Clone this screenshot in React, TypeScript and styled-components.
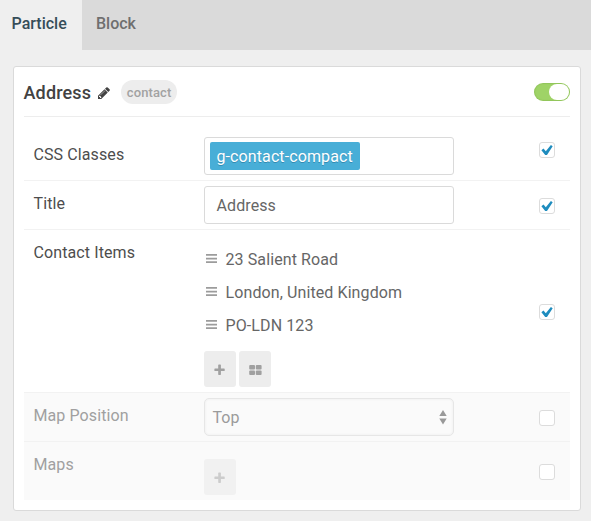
import React from 'react';
import styled, { createGlobalStyle } from 'styled-components';

const GlobalStyle = createGlobalStyle`
  *, *::before, *::after { box-sizing: border-box; }
  body {
    margin: 0;
    background: #efefef;
    color: #666;
    font-family: Roboto, "Liberation Sans", sans-serif;
    font-size: 16px;
    line-height: 24px;
    letter-spacing: 0.1px;
    -webkit-font-smoothing: antialiased;
  }
`;

const Page = styled.main`
  width: 591px;
  height: 521px;
  overflow: hidden;
  background: #efefef;
`;

const Tabs = styled.nav`
  display: flex;
  height: 50px;
  background: #dadada;
`;

const Tab = styled.a<{ $active?: boolean }>`
  width: ${p => (p.$active ? '82px' : 'auto')};
  height: 50px;
  padding-left: ${p => (p.$active ? '11.5px' : '14px')};
  line-height: 47px;
  font-weight: 500;
  letter-spacing: 0;
  color: ${p => (p.$active ? '#354d59' : '#6f6f6f')};
  background: ${p => (p.$active ? '#efefef' : 'transparent')};
`;

const Card = styled.section`
  margin: 16px 10px 0 13px;
  height: 445px;
  padding: 0 10px;
  background: #fff;
  border: 1px solid #dadada;
  border-radius: 3px;
`;

const CardHeader = styled.header`
  display: flex;
  align-items: center;
  height: 50px;
  border-bottom: 1px solid #ededed;
`;

const Heading = styled.h4`
  margin: 3px 0 0 -0.5px;
  font-size: 18px;
  font-weight: 500;
  letter-spacing: 0.15px;
  color: #424242;
`;

const PencilIcon = styled.svg`
  width: 12px;
  height: 12px;
  margin: 2px 0 0 7px;
  fill: #424242;
`;

const Badge = styled.span`
  width: 56px;
  height: 24px;
  margin: 1px 0 0 11px;
  border-radius: 12px;
  background: #ededed;
  color: #a2a2a2;
  font-size: 13px;
  font-weight: 500;
  line-height: 25px;
  text-align: center;
`;

const Toggle = styled.span`
  display: flex;
  justify-content: flex-end;
  width: 36px;
  height: 18px;
  margin-left: auto;
  padding: 1px;
  border-radius: 9px;
  background: #9fd367;
  box-shadow: inset 0 0 1px 1px rgba(70, 120, 20, 0.15);
`;

const Knob = styled.span`
  width: 20px;
  height: 16px;
  border-radius: 8px;
  background: #fff;
`;

const Row = styled.div<{ $height: number; $first?: boolean; $disabled?: boolean; $last?: boolean }>`
  display: grid;
  grid-template-columns: 180px 250px 1fr;
  height: ${p => p.$height}px;
  padding-top: ${p => (p.$first ? 15 : 0)}px;
  border-bottom: ${p => (p.$last ? 'none' : '1px solid #f2f2f2')};
  background: ${p => (p.$disabled ? '#fafafa' : '#fff')};
`;

const Label = styled.span<{ $disabled?: boolean }>`
  padding: 11px 0 0 9.5px;
  color: ${p => (p.$disabled ? '#a0a0a0' : '#4d4d4d')};
`;

const Field = styled.div`
  padding-top: 5px;
`;

const CheckCell = styled.div<{ $first?: boolean }>`
  display: flex;
  align-items: center;
  justify-content: flex-end;
  margin-top: ${p => (p.$first ? -15 : 0)}px;
  padding: 2px 15px 0 0;
`;

const Box = styled.span`
  display: flex;
  align-items: center;
  justify-content: center;
  width: 16px;
  height: 16px;
  background: #fff;
  border: 1px solid #dcdcdc;
  border-radius: 3px;
`;

const InputBox = styled.div<{ $tags?: boolean }>`
  display: flex;
  align-items: center;
  height: 38px;
  padding: ${p => (p.$tags ? '0 5px' : '2px 11.5px 0')};
  background: #fff;
  border: 1px solid #dadada;
  border-radius: 3px;
`;

const Tag = styled.span`
  width: 150px;
  height: 28px;
  padding-left: 6.5px;
  border-radius: 2px;
  background: #48aed7;
  color: #fff;
  line-height: 29px;
  text-shadow: 0 1px 0 rgba(0, 51, 83, 0.3);
`;

const Select = styled.div`
  display: flex;
  align-items: center;
  justify-content: space-between;
  height: 38px;
  padding: 1px 6px 0 7.5px;
  border: 1px solid #e6e6e6;
  border-radius: 5px;
  box-shadow: inset 0 0 3px rgba(0, 0, 0, 0.06);
  color: #9b9b9b;
`;

const List = styled.ul`
  list-style: none;
  margin: 8px 0 0;
  padding: 0;
`;

const ListItem = styled.li`
  display: flex;
  align-items: center;
  height: 33px;
  white-space: nowrap;
`;

const Handle = styled.svg`
  width: 11px;
  height: 9px;
  margin: -2px 8.5px 0 2px;
  fill: #9c9c9c;
`;

const Buttons = styled.div<{ $top: number }>`
  display: flex;
  gap: 3px;
  margin-top: ${p => p.$top}px;
`;

const IconButton = styled.button<{ $disabled?: boolean }>`
  display: flex;
  align-items: center;
  justify-content: center;
  width: 32px;
  height: 36px;
  padding: 1px 0 0;
  border: 0;
  border-radius: 3px;
  background: ${p => (p.$disabled ? '#f1f1f1' : '#ededed')};
  color: ${p => (p.$disabled ? '#cccccc' : '#a0a0a0')};
`;

const Plus = () => (
  <svg width="12" height="12" viewBox="0 0 12 12" fill="currentColor">
    <path d="M4.2 1.2q0-.6.6-.6h1.5q.6 0 .6.6v3.2h3.2q.6 0 .6.6v1.5q0 .6-.6.6H6.9v3.2q0 .6-.6.6H4.8q-.6 0-.6-.6V7.1H1q-.6 0-.6-.6V5q0-.6.6-.6h3.2z" />
  </svg>
);

const Tiles = () => (
  <svg width="14" height="12" viewBox="0 0 14 12" fill="currentColor">
    <rect x="1.2" y="1" width="5.8" height="4.5" rx="1" />
    <rect x="7.8" y="1" width="5.8" height="4.5" rx="1" />
    <rect x="1.2" y="6.4" width="5.8" height="4.6" rx="1" />
    <rect x="7.8" y="6.4" width="5.8" height="4.6" rx="1" />
  </svg>
);

const Checkbox = ({ checked }: { checked?: boolean }) => (
  <Box role="checkbox" aria-checked={!!checked}>
    {checked && (
      <svg width="14" height="14" viewBox="0 0 14 14" fill="#1e8cbe">
        <path d="M1.4 7.2 3.5 5.6 5.8 8.2 10.9 2 12.7 3.3 7 11.9H5.2z" />
      </svg>
    )}
  </Box>
);

interface SettingProps {
  label: string;
  height: number;
  checked?: boolean;
  first?: boolean;
  last?: boolean;
  children: React.ReactNode;
}

const Setting = ({ label, height, checked, first, last, children }: SettingProps) => (
  <Row $height={height} $first={first} $last={last} $disabled={!checked}>
    <Label $disabled={!checked}>{label}</Label>
    <Field>{children}</Field>
    <CheckCell $first={first}>
      <Checkbox checked={checked} />
    </CheckCell>
  </Row>
);

const contactItems = ['23 Salient Road', 'London, United Kingdom', 'PO-LDN 123'];

export default function App() {
  return (
    <>
      <GlobalStyle />
      <Page>
        <Tabs>
          <Tab $active>Particle</Tab>
          <Tab>Block</Tab>
        </Tabs>
        <Card>
          <CardHeader>
            <Heading>Address</Heading>
            <PencilIcon viewBox="0 0 1536 1536">
              <path d="M363 1408l91-91-235-235-91 91v107h128v128h107zM886 480q0-22-22-22-10 0-17 7l-542 542q-7 7-7 17 0 22 22 22 10 0 17-7l542-542q7-7 7-17zM832 288l416 416-832 832H0v-416zM1515 384q0 53-37 90l-166 166-416-416 166-165q36-38 90-38 53 0 91 38l235 234q37 39 37 91z" />
            </PencilIcon>
            <Badge>contact</Badge>
            <Toggle role="switch" aria-checked>
              <Knob />
            </Toggle>
          </CardHeader>
          <Setting label="CSS Classes" height={64} checked first>
            <InputBox $tags>
              <Tag>g-contact-compact</Tag>
            </InputBox>
          </Setting>
          <Setting label="Title" height={49} checked>
            <InputBox>Address</InputBox>
          </Setting>
          <Setting label="Contact Items" height={163} checked>
            <List>
              {contactItems.map(item => (
                <ListItem key={item}>
                  <Handle viewBox="0 0 11 9">
                    <path d="M0 .1h11v1.7H0zM0 3.7h11v1.7H0zM0 7.2h11v1.7H0z" />
                  </Handle>
                  {item}
                </ListItem>
              ))}
            </List>
            <Buttons $top={9}>
              <IconButton aria-label="Add item"><Plus /></IconButton>
              <IconButton aria-label="Edit all items"><Tiles /></IconButton>
            </Buttons>
          </Setting>
          <Setting label="Map Position" height={49}>
            <Select>
              Top
              <svg width="8" height="15" viewBox="0 0 8 15" fill="#999">
                <path d="M4 0 7.7 6H.3zM.3 8.5h7.4L4 14.5z" />
              </svg>
            </Select>
          </Setting>
          <Setting label="Maps" height={58} last>
            <Buttons $top={12}>
              <IconButton $disabled aria-label="Add map"><Plus /></IconButton>
            </Buttons>
          </Setting>
        </Card>
      </Page>
    </>
  );
}
